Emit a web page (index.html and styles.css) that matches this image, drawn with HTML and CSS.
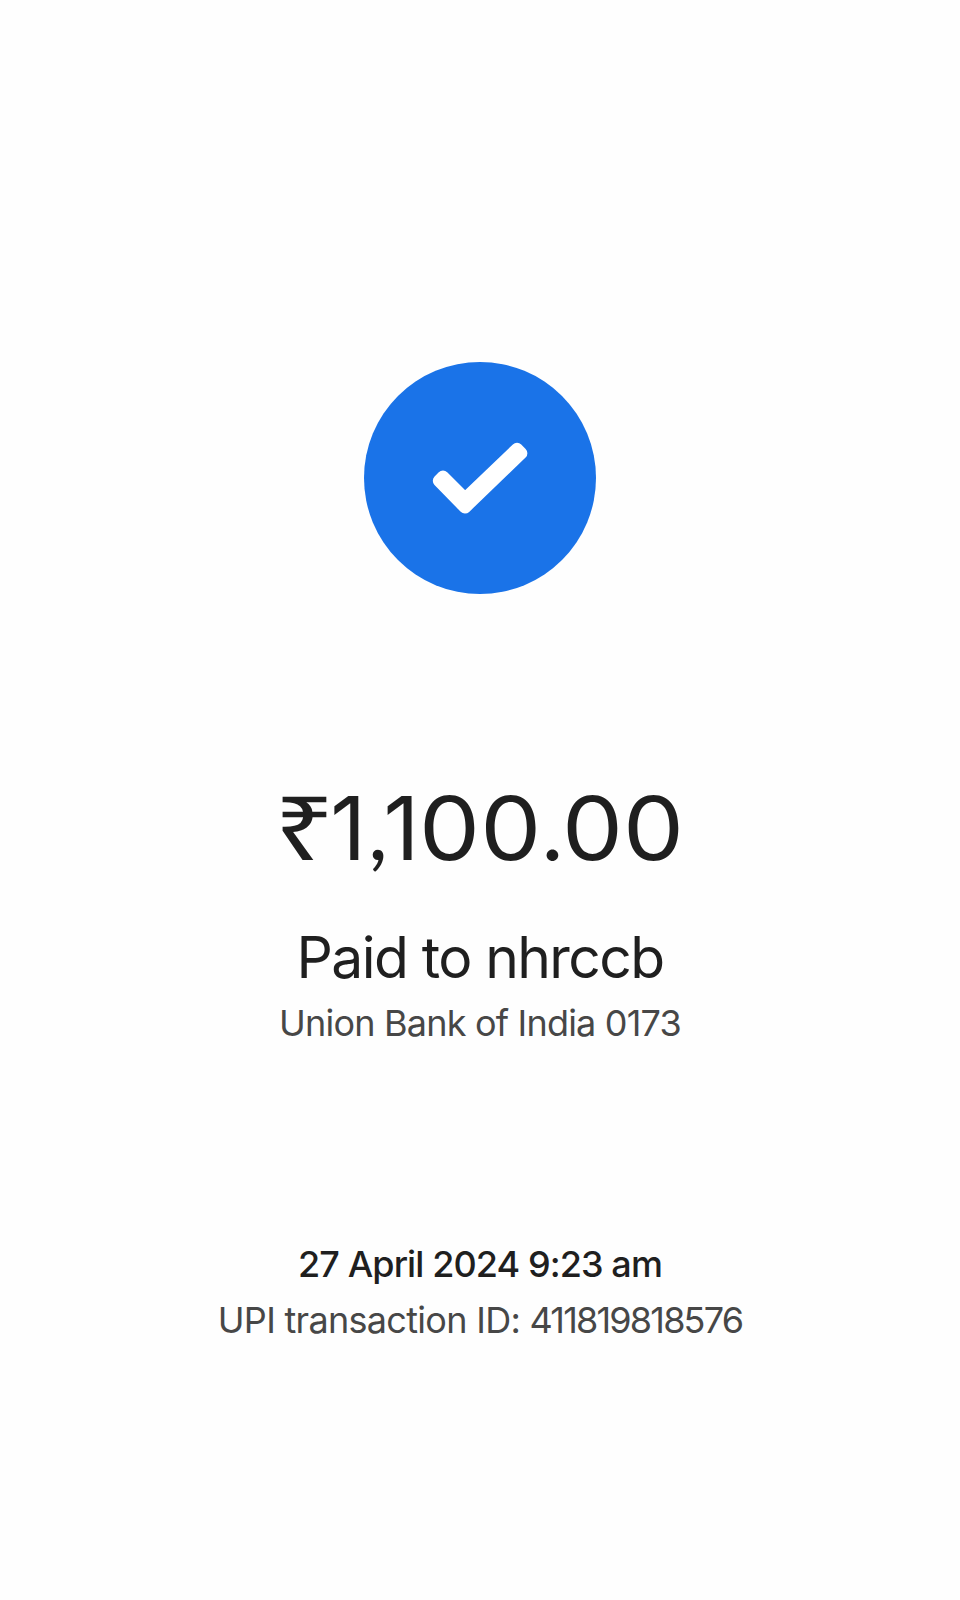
FILE: index.html
```html
<!DOCTYPE html>
<html lang="en">
<head>
<meta charset="utf-8">
<title>Payment</title>
<link rel="stylesheet" href="styles.css">
</head>
<body>

<div class="receipt">
  <svg class="check" viewBox="0 0 232 232">
    <circle cx="116" cy="116" r="116" fill="#1a73e8"/>
    <path d="M74.8 118.8 L79 114.6 L101 136.5 L153 86.8 L157.4 91.2 L101 145.6 Z" fill="#fff" stroke="#fff" stroke-width="12" stroke-linejoin="round"/>
  </svg>

  <h1 class="amount"><span class="rupee">₹</span><span class="one">1</span><span class="comma">,</span><span class="one">1</span><span class="zero">0</span><span class="zero last">0</span><span class="dot">.</span><span class="zero">0</span><span class="zero">0</span></h1>
  <h2 class="payee">Paid to nhrccb</h2>
  <p class="bank">Union Bank of India 0173</p>

  <p class="date">27 April 2024 9:23 am</p>
  <p class="upi">UPI transaction ID: <span class="number">411819818576</span></p>
</div>

</body>
</html>
```

FILE: styles.css
```css
body { margin:0; background-color:#fefefe; font-family:Inter, "Open Sans", sans-serif; color:#1f1f1f; }
h1, h2, p { margin:0; font-weight:400; white-space:nowrap; }

.receipt { display:flex; flex-direction:column; align-items:center; box-sizing:border-box; height:1600px; padding-top:362px; }
.check { display:block; width:232px; height:232px; }

.amount { display:flex; align-items:baseline; height:106px; margin-top:180px; padding-left:5px; font-size:88px; line-height:104px; letter-spacing:5px; }
.rupee { margin-right:4px; font-family:"Noto Sans", sans-serif; letter-spacing:-3px; transform:scaleX(1.2); }
.one { letter-spacing:2px; }
.comma { font-family:Lato, sans-serif; letter-spacing:-4.5px; }
.comma + .one { letter-spacing:3px; }
.zero { transform:scaleX(1.1); }
.last { letter-spacing:1.5px; }
.dot { letter-spacing:0; }

.payee { margin-top:44px; font-size:57px; line-height:68px; letter-spacing:-1.6px; }
.bank { margin-top:7px; font-size:36px; line-height:48px; color:#474747; letter-spacing:-0.8px; }
.date { margin-top:193px; font-size:36px; line-height:48px; font-weight:500; letter-spacing:-0.9px; }
.upi { margin-top:8px; font-size:36px; line-height:48px; color:#474747; letter-spacing:-0.7px; }
.number { letter-spacing:-1.8px; }
```
